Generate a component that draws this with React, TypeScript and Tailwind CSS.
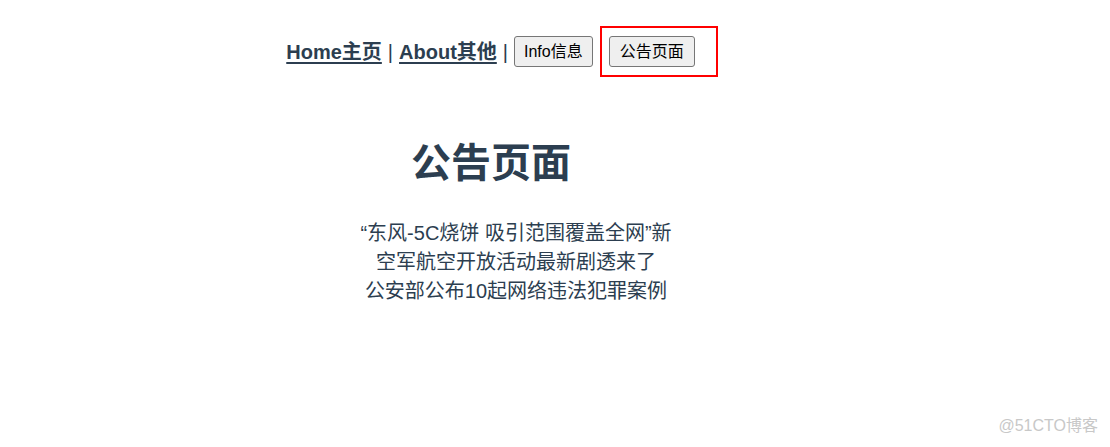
export default function App() {
  const news = [
    "“东风-5C烧饼 吸引范围覆盖全网”新",
    "空军航空开放活动最新剧透来了",
    "公安部公布10起网络违法犯罪案例",
  ];

  return (
    <div
      className="relative h-[447px] w-[1110px] overflow-hidden bg-white text-[#2c3e50]"
      style={{ fontFamily: '"Liberation Sans", Arial, "Noto Sans CJK SC", sans-serif' }}
    >
      <div className="w-[992px] text-center">
        {/* nav */}
        <div className="flex items-center justify-center pl-3 pt-[26px] text-[20px]">
          <a className="font-bold underline underline-offset-[3px]">Home主页</a>
          <span className="mx-[6px]">|</span>
          <a className="font-bold underline underline-offset-[3px]">About其他</a>
          <span className="mx-[6px]">|</span>
          <button className="h-[31px] rounded-[3px] border border-[#767676] bg-[#efefef] px-[9px] text-[16px] text-black">
            Info信息
          </button>
          <div className="ml-[7px] flex h-[51px] w-[118px] items-center border-2 border-[#ff0000] pl-[7px]">
            <button className="h-[31px] rounded-[3px] border border-[#767676] bg-[#efefef] px-[10px] text-[16px] text-black">
              公告页面
            </button>
          </div>
        </div>

        {/* heading */}
        <h1 className="mt-[62px] pr-[10px] text-[40px] font-bold leading-[48px]">公告页面</h1>

        {/* list */}
        <ul className="mt-[32px] pl-10 text-[20px] leading-[29px]">
          {news.map((n) => (
            <li key={n}>{n}</li>
          ))}
        </ul>
      </div>

      <div className="absolute bottom-[9px] right-[12px] text-[16px] text-[#c8c8c8]">@51CTO博客</div>
    </div>
  );
}
